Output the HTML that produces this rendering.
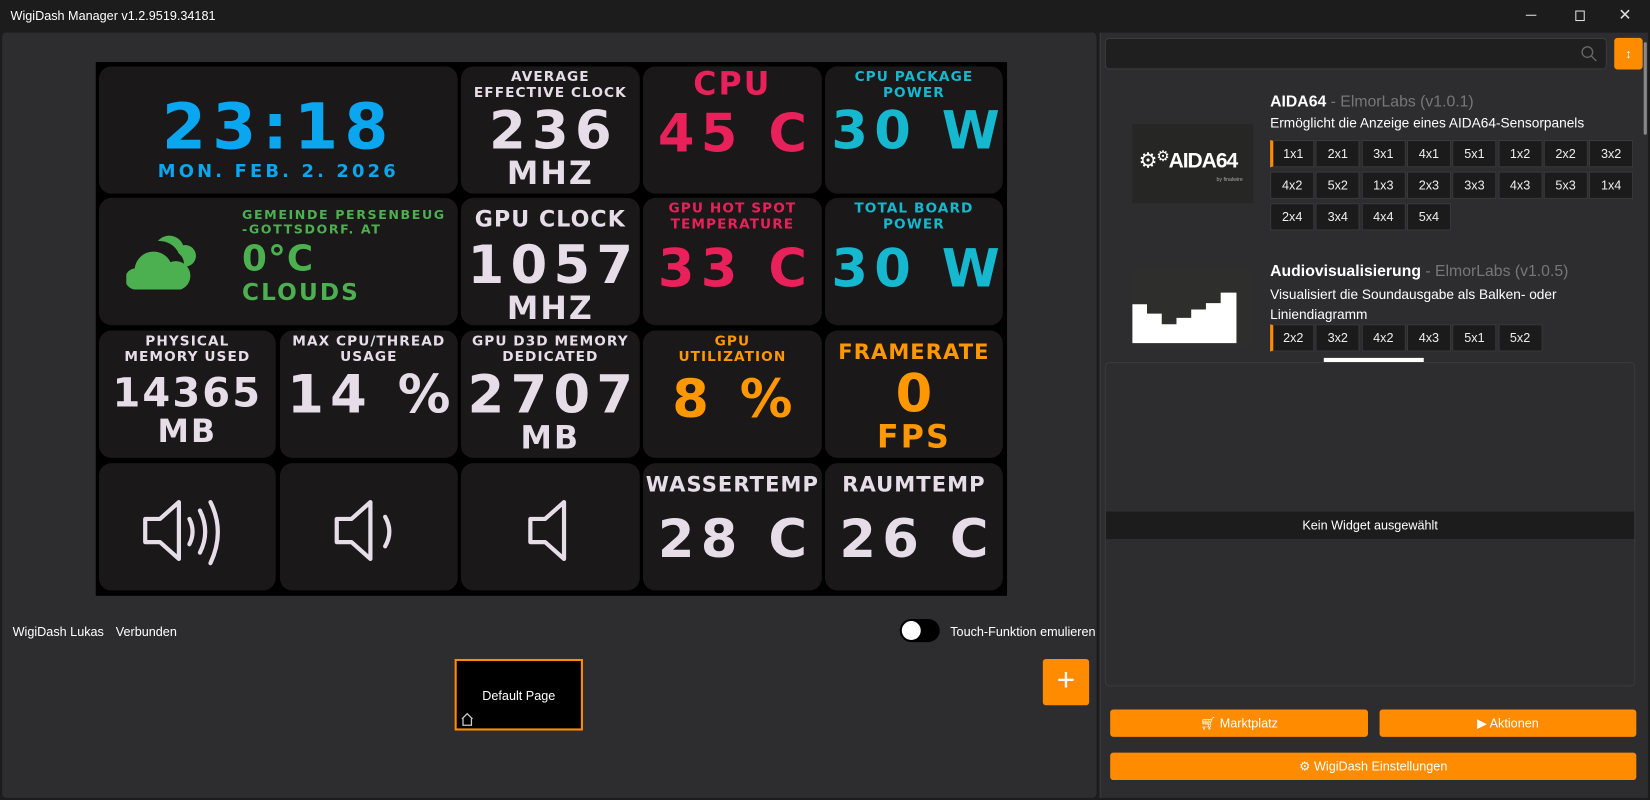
<!DOCTYPE html>
<html><head><meta charset="utf-8"><style>
*{margin:0;padding:0;box-sizing:border-box}
html,body{width:1650px;height:800px;overflow:hidden;background:#1c1c1c;font-family:"Liberation Sans","DejaVu Sans",sans-serif}
#w{position:absolute;left:0;top:0;width:1568px;height:760px;transform:scale(1.05230,1.05263);transform-origin:0 0}
.a{position:absolute}
.t{position:absolute;background:#1a1818;border-radius:12px;text-align:center;font-family:"DejaVu Sans",sans-serif;font-weight:bold;color:#e6dde8;overflow:hidden;white-space:nowrap}
.lb{font-size:13px;line-height:15px;letter-spacing:1px}
.big{font-size:50px;line-height:52px;letter-spacing:6px;margin-left:6px}
.u{font-size:30px;line-height:32px;letter-spacing:2px}
.btn{position:absolute;width:42px;height:26px;background:#1b1b1b;border:1px solid #3a3a3a;color:#eee;font-size:12px;line-height:24px;text-align:center}
.ob{position:absolute;background:#ff8c00;border-radius:3px;color:#fff;font-size:12px;text-align:center;line-height:26px}
</style></head><body><div id="w">
<div class="a" style="left:10px;top:8px;color:#fff;font-size:12px">WigiDash Manager v1.2.9519.34181</div>
<div class="a" style="left:1450px;top:14px;width:10px;height:1px;background:#ddd"></div>
<div class="a" style="left:1497px;top:10px;width:9px;height:10px;border:1px solid #ddd"></div>
<div class="a" style="left:1538px;top:5px;color:#ddd;font-size:15px">✕</div>
<div class="a" style="left:2px;top:31px;width:1040px;height:727px;background:#2d2d30;border-radius:4px"></div>
<div class="a" style="left:1045px;top:31px;width:521px;height:727px;background:#2d2d30;border-left:1px solid #3c3c40"></div>

<div class="a" style="left:91px;top:59px;width:866px;height:507px;background:#000"></div>
<!-- row1 -->
<div class="t" style="left:94px;top:63px;width:341px;height:121px">
<div style="color:#0aa6f0;font-size:60px;line-height:60px;margin-top:28px;letter-spacing:6px">23:18</div>
<div style="color:#0aa6f0;font-size:17px;letter-spacing:3px;margin-top:2px">MON. FEB. 2. 2026</div></div>
<div class="t" style="left:438px;top:63px;width:170px;height:121px"><div class="lb" style="margin-top:3px">AVERAGE<br>EFFECTIVE CLOCK</div><div class="big" style="margin-top:2px">236</div><div class="u">MHZ</div></div>
<div class="t" style="left:611px;top:63px;width:170px;height:121px;color:#e8215b"><div style="font-size:30px;line-height:32px;margin-top:2px;letter-spacing:2px">CPU</div><div class="big" style="margin-top:4px">45 C</div></div>
<div class="t" style="left:784px;top:63px;width:169px;height:121px;color:#16b8cf"><div class="lb" style="margin-top:3px">CPU PACKAGE<br>POWER</div><div class="big" style="margin-top:2px">30 W</div></div>
<!-- row2 -->
<div class="t" style="left:94px;top:188px;width:341px;height:121px">
<svg class="a" style="left:26px;top:34px" width="72" height="56" viewBox="0 0 72 54"><path d="M30 6a14 14 0 0 1 24 4a10 10 0 0 1 4 20l-4 2a12 12 0 0 0-4-14a20 20 0 0 0-20-12z" fill="#4caf50"/><path d="M10 52a10 10 0 0 1-2-20a18 18 0 0 1 34-6a12 12 0 0 1 10 26z" fill="#4caf50"/></svg>
<div class="a" style="left:136px;top:9px;text-align:left;color:#4caf50;font-size:12px;line-height:14px;letter-spacing:1.5px">GEMEINDE PERSENBEUG<br>-GOTTSDORF. AT</div>
<div class="a" style="left:136px;top:38px;text-align:left;color:#4caf50;font-size:34px;letter-spacing:1px">0°C</div>
<div class="a" style="left:136px;top:78px;text-align:left;color:#4caf50;font-size:22px;letter-spacing:2px">CLOUDS</div></div>
<div class="t" style="left:438px;top:188px;width:170px;height:121px"><div style="font-size:21px;margin-top:8px;letter-spacing:1px">GPU CLOCK</div><div class="big" style="margin-top:6px">1057</div><div class="u">MHZ</div></div>
<div class="t" style="left:611px;top:188px;width:170px;height:121px;color:#e8215b"><div class="lb" style="margin-top:3px">GPU HOT SPOT<br>TEMPERATURE</div><div class="big" style="margin-top:8px">33 C</div></div>
<div class="t" style="left:784px;top:188px;width:169px;height:121px;color:#16b8cf"><div class="lb" style="margin-top:3px">TOTAL BOARD<br>POWER</div><div class="big" style="margin-top:8px">30 W</div></div>
<!-- row3 -->
<div class="t" style="left:94px;top:314px;width:168px;height:121px"><div class="lb" style="margin-top:3px">PHYSICAL<br>MEMORY USED</div><div style="font-size:38px;line-height:44px;letter-spacing:2px;margin-top:4px">14365</div><div class="u">MB</div></div>
<div class="t" style="left:266px;top:314px;width:169px;height:121px"><div class="lb" style="margin-top:3px">MAX CPU/THREAD<br>USAGE</div><div class="big" style="margin-top:2px">14 %</div></div>
<div class="t" style="left:438px;top:314px;width:170px;height:121px"><div class="lb" style="margin-top:3px">GPU D3D MEMORY<br>DEDICATED</div><div class="big" style="margin-top:2px">2707</div><div class="u">MB</div></div>
<div class="t" style="left:611px;top:314px;width:170px;height:121px;color:#ff9800"><div class="lb" style="margin-top:3px">GPU<br>UTILIZATION</div><div class="big" style="margin-top:6px">8 %</div></div>
<div class="t" style="left:784px;top:314px;width:169px;height:121px;color:#ff9800"><div style="font-size:20px;margin-top:8px;letter-spacing:1px">FRAMERATE</div><div class="big" style="margin-top:2px">0</div><div class="u">FPS</div></div>
<!-- row4 -->
<div class="t" style="left:94px;top:440px;width:168px;height:121px"><svg class="a" style="left:40px;top:25px" width="90" height="80" viewBox="0 0 90 80"><path d="M4 28h14l18-16v54l-18-16h-14z" fill="none" stroke="#e6dde8" stroke-width="4" stroke-linejoin="round"/><path d="M46 28q6 12 0 24M56 20q10 20 0 40M66 12q14 28 0 58" fill="none" stroke="#e6dde8" stroke-width="4" stroke-linecap="round"/></svg></div>
<div class="t" style="left:266px;top:440px;width:169px;height:121px"><svg class="a" style="left:50px;top:25px" width="70" height="80" viewBox="0 0 70 80"><path d="M4 28h14l18-16v54l-18-16h-14z" fill="none" stroke="#e6dde8" stroke-width="4" stroke-linejoin="round"/><path d="M50 26q8 14 0 28" fill="none" stroke="#e6dde8" stroke-width="4" stroke-linecap="round"/></svg></div>
<div class="t" style="left:438px;top:440px;width:170px;height:121px"><svg class="a" style="left:62px;top:25px" width="60" height="80" viewBox="0 0 60 80"><path d="M4 28h14l18-16v54l-18-16h-14z" fill="none" stroke="#e6dde8" stroke-width="4" stroke-linejoin="round"/></svg></div>
<div class="t" style="left:611px;top:440px;width:170px;height:121px"><div style="font-size:20px;margin-top:8px;letter-spacing:1px">WASSERTEMP</div><div class="big" style="margin-top:14px">28 C</div></div>
<div class="t" style="left:784px;top:440px;width:169px;height:121px"><div style="font-size:20px;margin-top:8px;letter-spacing:1px">RAUMTEMP</div><div class="big" style="margin-top:14px">26 C</div></div>

<div class="a" style="left:12px;top:593px;color:#fff;font-size:12px">WigiDash Lukas</div>
<div class="a" style="left:110px;top:593px;color:#fff;font-size:12px">Verbunden</div>
<div class="a" style="left:855px;top:588px;width:38px;height:22px;border-radius:11px;background:#000"></div>
<div class="a" style="left:857px;top:590px;width:18px;height:18px;border-radius:9px;background:#fff"></div>
<div class="a" style="left:903px;top:593px;color:#fff;font-size:12px">Touch-Funktion emulieren</div>
<div class="a" style="left:432px;top:626px;width:122px;height:68px;border:2px solid #ff8c00;background:#000;color:#fff;font-size:12px;text-align:center;line-height:66px">Default Page</div>
<svg class="a" style="left:437px;top:676px" width="14" height="14" viewBox="0 0 14 14"><path d="M2 7l5-5 5 5M3 6v7h8V6" fill="none" stroke="#ccc" stroke-width="1.2"/></svg>
<div class="ob" style="left:991px;top:626px;width:44px;height:44px;font-size:30px;line-height:42px;font-weight:300">+</div>

<!-- right -->
<div class="a" style="left:1050px;top:36px;width:477px;height:30px;background:#1f1f1f;border:1px solid #3a3a3a;border-radius:4px"></div>
<svg class="a" style="left:1502px;top:43px" width="16" height="16" viewBox="0 0 16 16"><circle cx="6.5" cy="6.5" r="5" fill="none" stroke="#666" stroke-width="1.3"/><path d="M10 10l5 5" stroke="#666" stroke-width="1.3"/></svg>
<div class="ob" style="left:1534px;top:36px;width:27px;height:30px;line-height:30px;font-size:12px">↕</div>
<div class="a" style="left:1562px;top:40px;width:3px;height:88px;background:#888;border-radius:2px"></div>

<div class="a" style="left:1076px;top:118px;width:115px;height:75px;background:#262624">
<div class="a" style="left:6px;top:22px;color:#fff;font-weight:bold;font-size:20px;letter-spacing:-1px">⚙<span style="font-size:14px;vertical-align:top">⚙</span>AIDA64</div>
<div class="a" style="left:80px;top:50px;color:#aaa;font-size:5px">by finalwire</div></div>
<div class="a" style="left:1207px;top:88px;color:#fff;font-size:15px;font-weight:bold">AIDA64 <span style="color:#777;font-weight:normal">- ElmorLabs (v1.0.1)</span></div>
<div class="a" style="left:1207px;top:109px;color:#fff;font-size:13px">Ermöglicht die Anzeige eines AIDA64-Sensorpanels</div>

<div class="a" style="left:1076px;top:255px;width:115px;height:74px;background:#2e2e2c"><svg width="115" height="74" viewBox="0 0 115 74"><path d="M0 34h14v9h14v10h14v-6h14v-8h14v-6h14v-10h15v48H0z" fill="#fff"/></svg></div>
<div class="a" style="left:1207px;top:249px;color:#fff;font-size:15px;font-weight:bold">Audiovisualisierung <span style="color:#777;font-weight:normal">- ElmorLabs (v1.0.5)</span></div>
<div class="a" style="left:1207px;top:270px;color:#fff;font-size:13px;line-height:19px">Visualisiert die Soundausgabe als Balken- oder<br>Liniendiagramm</div>
<div class="a" style="left:1258px;top:340px;width:95px;height:4px;background:#fff"></div>

<div class="a" style="left:1050px;top:344px;width:504px;height:308px;border:1px solid #3a3a3a;border-radius:4px;background:#2d2d30"></div>
<div class="a" style="left:1051px;top:486px;width:502px;height:26px;background:#1c1c1c;color:#fff;font-size:12px;text-align:center;line-height:26px">Kein Widget ausgewählt</div>

<div class="ob" style="left:1055px;top:674px;width:245px;height:26px">🛒︎ Marktplatz</div>
<div class="ob" style="left:1311px;top:674px;width:244px;height:26px">▶ Aktionen</div>
<div class="ob" style="left:1055px;top:715px;width:500px;height:26px">⚙ WigiDash Einstellungen</div>

<div id="bt"></div>
<script>
var b=document.getElementById('bt'),h='';
function row(y,l,first){for(var i=0;i<l.length;i++){h+='<div class="btn" style="left:'+(1207+43.3*i)+'px;top:'+y+'px'+(first&&i==0?';border-left:3px solid #ff8c00':'')+'">'+l[i]+'</div>';}}
row(133,['1x1','2x1','3x1','4x1','5x1','1x2','2x2','3x2'],1);
row(163,['4x2','5x2','1x3','2x3','3x3','4x3','5x3','1x4']);
row(193,['2x4','3x4','4x4','5x4']);
row(308,['2x2','3x2','4x2','4x3','5x1','5x2'],1);
b.innerHTML=h;
</script>
</div></body></html>
